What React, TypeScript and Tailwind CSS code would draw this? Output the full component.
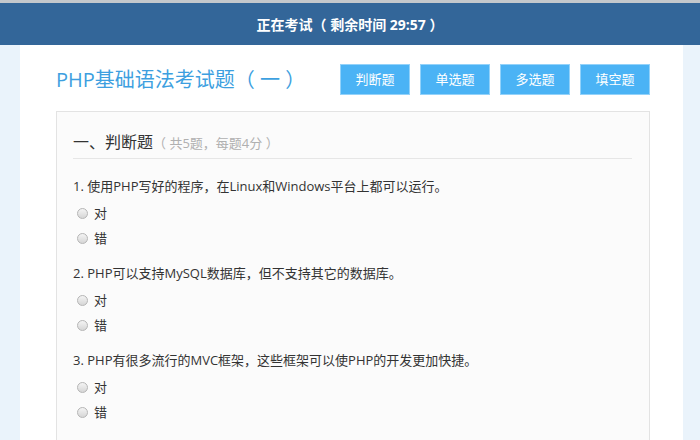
const questions = [
  "1. 使用PHP写好的程序，在Linux和Windows平台上都可以运行。",
  "2. PHP可以支持MySQL数据库，但不支持其它的数据库。",
  "3. PHP有很多流行的MVC框架，这些框架可以使PHP的开发更加快捷。",
];

const tabs = ["判断题", "单选题", "多选题", "填空题"];

function Radio({ label }: { label: string }) {
  return (
    <label className="flex items-center h-[25px] pl-[4px] gap-[6px] text-[13px] text-[#333]">
      <span className="w-[11px] h-[11px] rounded-full border border-[#b5b5b5] bg-gradient-to-b from-[#f4f4f4] to-[#d6d6d6]" />
      {label}
    </label>
  );
}

export default function App() {
  return (
    <div
      className="min-h-screen bg-[#eaf3fb] border-t-[3px] border-[#c4c8cc]"
      style={{ fontFamily: '"Open Sans", "Noto Sans CJK SC", sans-serif' }}
    >
      <div className="h-[42px] bg-[#336699] flex items-center justify-center text-white font-bold text-[14px]">
        正在考试（ 剩余时间 29:57 ）
      </div>

      <div className="ml-[20px] w-[663px] bg-white pl-[36px] pr-[33px] pb-[40px]">
        <div className="flex items-center justify-between pt-[19px]">
          <h1 className="text-[20px] text-[#3d9fe0] leading-[31px]">PHP基础语法考试题（ 一 ）</h1>
          <div className="flex gap-[10px]">
            {tabs.map((t) => (
              <button
                key={t}
                className="w-[70px] h-[31px] bg-[#4bb3f5] border border-[#93d2fa] text-white text-[13px]"
              >
                {t}
              </button>
            ))}
          </div>
        </div>

        <div className="mt-[16px] border border-[#e3e3e3] bg-[#fbfbfb] pl-[16px] pr-[17px] pt-[18px] pb-[30px]">
          <div className="border-b border-[#e6e6e6] pb-[3px] leading-[24px]">
            <span className="text-[16px] text-[#333]">一、判断题</span>
            <span className="text-[13px] text-[#b0b0b0]">（ 共5题，每题4分 ）</span>
          </div>

          <div className="mt-[17px] flex flex-col gap-[12px]">
            {questions.map((q) => (
              <div key={q}>
                <p className="text-[13px] text-[#333] leading-[20px]">{q}</p>
                <div className="mt-[5px]">
                  <Radio label="对" />
                  <Radio label="错" />
                </div>
              </div>
            ))}
          </div>
        </div>
      </div>
    </div>
  );
}
